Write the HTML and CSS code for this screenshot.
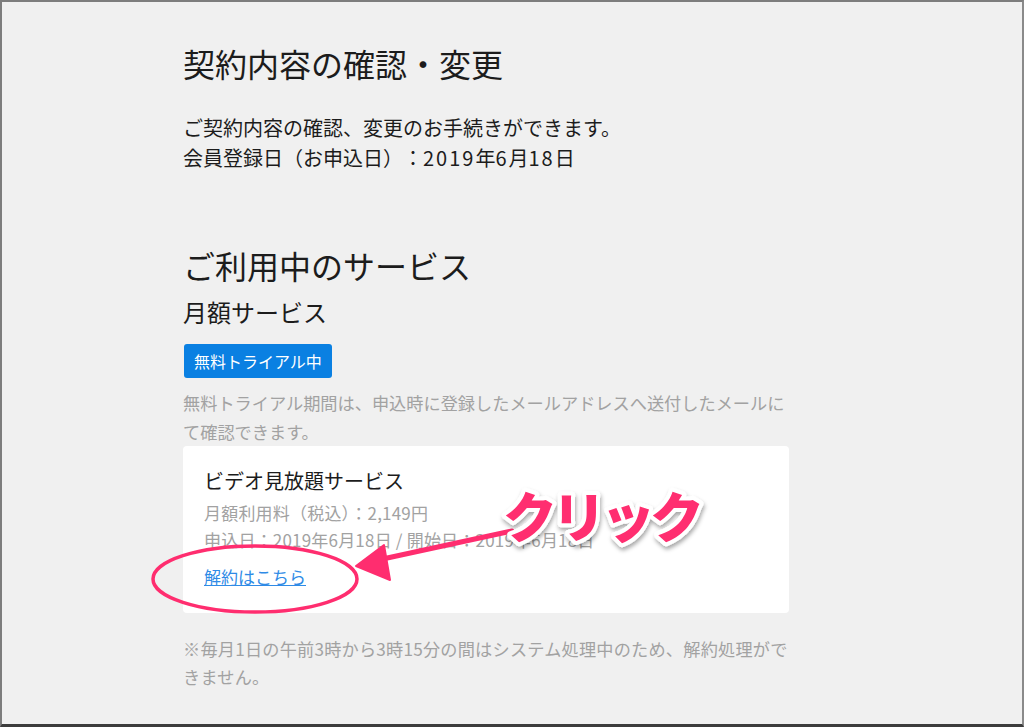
FILE: index.html
```html
<!DOCTYPE html>
<html lang="ja">
<head>
<meta charset="utf-8">
<title>契約内容の確認・変更</title>
<link rel="stylesheet" href="styles.css">
</head>
<body>
<div class="frame">
  <main class="content">
    <h1 class="title">契約内容の確認・変更</h1>
    <p class="lead">ご契約内容の確認、変更のお手続きができます。<br>会員登録日（お申込日）：<span class="num">2019</span>年<span class="num">6</span>月<span class="num">18</span>日</p>

    <h2 class="section-title">ご利用中のサービス</h2>
    <h3 class="sub-title">月額サービス</h3>
    <div class="badge-row"><span class="badge">無料トライアル中</span></div>
    <p class="muted">無料トライアル期間は、申込時に登録したメールアドレスへ送付したメールにて確認できます。</p>

    <section class="card">
      <div class="card-title">ビデオ見放題サービス</div>
      <div class="card-meta">月額利用料（税込）：2,149円</div>
      <div class="card-meta">申込日：2019年6月18日 / 開始日：2019年6月18日</div>
      <a class="card-link" href="#">解約はこちら</a>
    </section>

    <p class="note">※毎月1日の午前3時から3時15分の間はシステム処理中のため、解約処理ができません。</p>
  </main>

  <svg class="annotation" width="1024" height="727" viewBox="0 0 1024 727">
    <defs>
      <filter id="shadow" x="-20%" y="-20%" width="140%" height="160%">
        <feDropShadow dx="1" dy="3" stdDeviation="2" flood-color="#000" flood-opacity="0.35"/>
      </filter>
    </defs>
    <ellipse cx="255" cy="579" rx="102" ry="33" fill="none" stroke="#ff2d6f" stroke-width="3.5"/>
    <line x1="512" y1="531" x2="378" y2="560" stroke="#ff2d6f" stroke-width="5" stroke-linecap="round"/>
    <polygon points="356,566 384,545 390,580" fill="#ff2d6f" stroke="#ff2d6f" stroke-width="2" stroke-linejoin="round"/>
    <text class="click-label" x="503" y="538" filter="url(#shadow)">クリック</text>
  </svg>
</div>
</body>
</html>
```

FILE: styles.css
```css
html, body {
  margin: 0;
  padding: 0;
}

body {
  font-family: "Noto Sans CJK JP", "Noto Sans", sans-serif;
  color: #1c1c1c;
  background: #3a3a3a;
}

.frame {
  position: relative;
  box-sizing: border-box;
  width: 1024px;
  height: 727px;
  background: #f0f0f0;
  border-top: 2px solid #7d7d7d;
  border-left: 2px solid #7d7d7d;
  border-right: 2px solid #8a8a8a;
  border-bottom: 3px solid #3c3c3c;
  overflow: hidden;
}

.content {
  width: 606px;
  padding: 37px 0 0 181px;
}

.title {
  margin: 0;
  font-size: 32px;
  line-height: 48px;
  font-weight: 400;
}

.lead {
  margin: 26px 0 0;
  font-size: 20px;
  line-height: 30px;
  text-spacing-trim: space-all;
}

.num {
  letter-spacing: 2px;
}

.section-title {
  margin: 68px 0 0;
  font-size: 32px;
  line-height: 48px;
  font-weight: 400;
}

.sub-title {
  margin: 5px 0 0;
  font-size: 24px;
  line-height: 36px;
  font-weight: 400;
}

.badge-row {
  margin-top: 14px;
  display: flex;
}

.badge {
  display: inline-block;
  background: #0a80e2;
  color: #fff;
  font-size: 16px;
  line-height: 34px;
  padding: 0 10px;
  border-radius: 3px;
  margin-left: 1px;
}

.muted {
  margin: 10px 0 0;
  font-size: 17.2px;
  line-height: 29px;
  color: #a2a2a2;
}

.card {
  margin-top: 0;
  background: #fff;
  border-radius: 4px;
  padding: 20px 21px 23px;
  display: flex;
  flex-direction: column;
  align-items: flex-start;
}

.card-title {
  font-size: 20px;
  line-height: 30px;
  color: #1c1c1c;
}

.card-meta {
  font-size: 17px;
  line-height: 27px;
  letter-spacing: 0.2px;
  color: #a2a2a2;
}

.card-title + .card-meta {
  margin-top: 3px;
}

.card-link {
  margin-top: 10px;
  font-size: 17px;
  line-height: 27px;
  color: #2f8be6;
  text-decoration: underline;
}

.note {
  margin: 22px 0 0;
  font-size: 17.2px;
  line-height: 28px;
  letter-spacing: 0.2px;
  color: #a2a2a2;
}

.annotation {
  position: absolute;
  top: -2px;
  left: -2px;
  pointer-events: none;
}

.click-label {
  font-family: "Noto Sans CJK JP", sans-serif;
  font-weight: 900;
  font-size: 54px;
  letter-spacing: -5px;
  fill: #ff2d6f;
  stroke: #ffffff;
  stroke-width: 8px;
  stroke-linejoin: round;
  paint-order: stroke fill;
}
```
